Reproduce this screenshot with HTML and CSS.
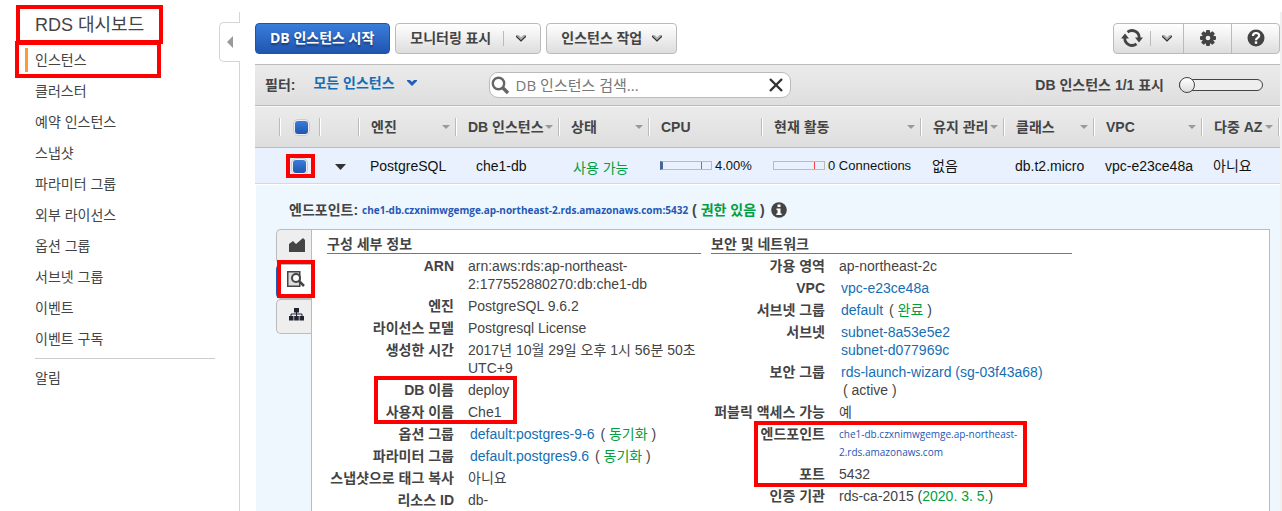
FILE: index.html
```html
<!DOCTYPE html>
<html lang="ko">
<head>
<meta charset="utf-8">
<title>RDS 대시보드</title>
<link rel="stylesheet" href="styles.css">
</head>
<body>
<div class="layout">
  <aside class="sidebar">
    <h1 class="side-title">RDS 대시보드<span class="mark mark-title"></span></h1>
    <nav>
      <ul class="side-list">
        <li class="active"><a href="#">인스턴스</a><span class="mark mark-nav"></span></li>
        <li><a href="#">클러스터</a></li>
        <li><a href="#">예약 인스턴스</a></li>
        <li><a href="#">스냅샷</a></li>
        <li><a href="#">파라미터 그룹</a></li>
        <li><a href="#">외부 라이선스</a></li>
        <li><a href="#">옵션 그룹</a></li>
        <li><a href="#">서브넷 그룹</a></li>
        <li><a href="#">이벤트</a></li>
        <li><a href="#">이벤트 구독</a></li>
      </ul>
      <ul class="side-list side-extra">
        <li><a href="#">알림</a></li>
      </ul>
    </nav>
    <button class="collapse" type="button" aria-label="접기"><svg width="6" height="12" viewBox="0 0 6 12"><path d="M6 0v12L0 6z" fill="#999"/></svg></button>
  </aside>

  <main class="main">
    <div class="toolbar">
      <button class="btn primary" type="button">DB 인스턴스 시작</button>
      <button class="btn split" type="button"><span>모니터링 표시</span><span class="bar"></span><svg class="chev" width="10" height="7" viewBox="0 0 10 7"><path d="M0 0h2.500L5 2.500 7.500 0H10v1.500L5 6.500 0 1.500z" fill="#aaa"/><path d="M0 1.200L5 6l5-4.800" fill="none" stroke="#333" stroke-width="1.200"/></svg></button>
      <button class="btn" type="button"><span>인스턴스 작업</span><svg class="chev" width="10" height="7" viewBox="0 0 10 7"><path d="M0 0h2.500L5 2.500 7.500 0H10v1.500L5 6.500 0 1.500z" fill="#aaa"/><path d="M0 1.200L5 6l5-4.800" fill="none" stroke="#333" stroke-width="1.200"/></svg></button>
      <div class="tools">
        <button class="tool tool-refresh" type="button" aria-label="새로 고침">
          <svg width="22" height="20" viewBox="0 0 22 20"><g fill="none" stroke="#444" stroke-width="2.800"><path d="M6.500 4.200A7.200 7.200 0 0 1 18.200 10"/><path d="M15.500 15.800A7.200 7.200 0 0 1 3.800 10"/></g><path d="M14 9.500h8l-4 5zM0 10.500h8L4 5.500z" fill="#444"/></svg>
          <span class="bar"></span>
          <svg class="chev" width="10" height="7" viewBox="0 0 10 7"><path d="M0 0h2.500L5 2.500 7.500 0H10v1.500L5 6.500 0 1.500z" fill="#aaa"/><path d="M0 1.200L5 6l5-4.800" fill="none" stroke="#333" stroke-width="1.200"/></svg>
        </button>
        <button class="tool" type="button" aria-label="설정">
          <svg width="16" height="16" viewBox="0 0 16 16"><g fill="#444"><circle cx="8" cy="8" r="6"/><rect x="6" y="0" width="4" height="16" rx="1"/><rect x="0" y="6" width="16" height="4" rx="1"/><rect x="6" y="0" width="4" height="16" rx="1" transform="rotate(45 8 8)"/><rect x="6" y="0" width="4" height="16" rx="1" transform="rotate(-45 8 8)"/></g><circle cx="8" cy="8" r="2.300" fill="#eee"/></svg>
        </button>
        <button class="tool" type="button" aria-label="도움말">
          <svg width="18" height="18" viewBox="0 0 18 18"><circle cx="9" cy="9" r="8.500" fill="#444"/><path d="M6 7c0-4 6.200-3.800 6.200-.4C12.200 9 9 8.800 9 11.300" fill="none" stroke="#fff" stroke-width="2.200"/><rect x="7.800" y="12.400" width="2.400" height="2.400" fill="#fff"/></svg>
        </button>
      </div>
    </div>

    <div class="filters">
      <span class="filter-label">필터:</span>
      <button class="filter-pick" type="button"><span>모든 인스턴스</span><svg class="chev" width="10" height="6" viewBox="0 0 10 6"><path d="M0 0h3l2 2 2-2h3v1L5 6 0 1z" fill="#1f5fb8"/></svg></button>
      <div class="search">
        <svg width="19" height="19" viewBox="0 0 19 19"><circle cx="7.500" cy="7.500" r="5.700" fill="none" stroke="#666" stroke-width="2.400"/><path d="M11.500 11.500l5.500 5.500" stroke="#666" stroke-width="3.400"/></svg>
        <input type="text" aria-label="DB 인스턴스 검색" placeholder="DB 인스턴스 검색...">
        <button class="clear" type="button" aria-label="지우기"><svg width="14" height="14" viewBox="0 0 14 14"><path d="M1 1l12 12M13 1L1 13" stroke="#333" stroke-width="2.400"/></svg></button>
      </div>
      <label class="count" for="page">DB 인스턴스 1/1 표시</label>
      <input class="slider" id="page" type="range" min="0" max="1" value="0">
    </div>

    <table class="grid">
      <colgroup><col class="w-pad"><col class="w-check"><col class="w-arrow"><col class="w-engine"><col class="w-name"><col class="w-state"><col class="w-cpu"><col class="w-act"><col class="w-maint"><col class="w-class"><col class="w-vpc"><col></colgroup>
      <thead>
        <tr>
          <th></th>
          <th class="pick"><input type="checkbox" checked aria-label="모두 선택"></th>
          <th></th>
          <th class="sort"><span>엔진</span></th>
          <th class="sort"><span>DB 인스턴스</span></th>
          <th class="sort"><span>상태</span></th>
          <th><span>CPU</span></th>
          <th class="sort"><span>현재 활동</span></th>
          <th class="sort"><span>유지 관리</span></th>
          <th class="sort"><span>클래스</span></th>
          <th class="sort"><span>VPC</span></th>
          <th class="sort"><span>다중 AZ</span></th>
        </tr>
      </thead>
      <tbody>
        <tr>
          <td></td>
          <td class="pick"><span class="pick-box"><input type="checkbox" checked aria-label="che1-db 선택"><span class="mark mark-check"></span></span></td>
          <td class="pick"><svg width="11" height="6" viewBox="0 0 11 6"><path d="M0 0h11L5.500 6z" fill="#333"/></svg></td>
          <td>PostgreSQL</td>
          <td class="name">che1-db</td>
          <td class="state">사용 가능</td>
          <td><div class="meter"><span class="gauge used"></span>4.00%</div></td>
          <td><div class="meter"><span class="gauge"></span>0 Connections</div></td>
          <td>없음</td>
          <td>db.t2.micro</td>
          <td>vpc-e23ce48a</td>
          <td>아니요</td>
        </tr>
      </tbody>
    </table>

    <section class="details">
      <div class="endpoint">
        <span>엔드포인트:</span>
        <span class="host">che1-db.czxnimwgemge.ap-northeast-2.rds.amazonaws.com:5432</span>
        <span>( <span class="ok">권한 있음</span> )</span>
        <svg width="16" height="16" viewBox="0 0 16 16"><circle cx="8" cy="8" r="7.800" fill="#444"/><path d="M6.500 2.500h3v2.500h-3zM5.500 6.500h4v5h1.200V13H5.300v-1.500h1.200V8h-1z" fill="#fff"/></svg>
      </div>
      <div class="detail-body">
        <div class="tabs">
          <button class="tab" type="button" aria-label="모니터링"><svg width="16" height="14" viewBox="0 0 16 14"><path d="M0 14V6l4-3 3 3 7-6 2 2v12z" fill="#444"/></svg></button>
          <button class="tab current" type="button" aria-label="세부 정보"><svg width="18" height="16" viewBox="0 0 18 16"><path d="M.75.750h12v14.500h-12z" fill="#ddd" stroke="#444" stroke-width="1.500"/><circle cx="9" cy="7" r="4" fill="#fff" stroke="#444" stroke-width="2"/><path d="M12 10l5 5" stroke="#444" stroke-width="2.500"/></svg><span class="mark mark-tab"></span></button>
          <button class="tab" type="button" aria-label="구성"><svg width="15" height="13" viewBox="0 0 15 13"><path d="M5 0h5v4.500H5zM0 8h4.500v4.500H0zM5.200 8h4.600v4.500H5.200zM10.500 8H15v4.500h-4.500z" fill="#223"/><path d="M7.500 4v4M2 8.500v-2.500h11v2.500" fill="none" stroke="#223"/></svg></button>
        </div>
        <div class="panel">
          <section class="config">
            <h2>구성 세부 정보</h2>
            <dl>
              <dt>ARN</dt><dd>arn:aws:rds:ap-northeast-<br>2:177552880270:db:che1-db</dd>
              <dt>엔진</dt><dd>PostgreSQL 9.6.2</dd>
              <dt>라이선스 모델</dt><dd>Postgresql License</dd>
              <dt>생성한 시간</dt><dd>2017년 10월 29일 오후 1시 56분 50초<br>UTC+9</dd>
              <dt class="anchor"><span class="mark mark-db"></span>DB 이름</dt><dd>deploy</dd>
              <dt>사용자 이름</dt><dd>Che1</dd>
              <dt>옵션 그룹</dt><dd><a href="#">default:postgres-9-6</a> ( <span class="ok">동기화</span> )</dd>
              <dt>파라미터 그룹</dt><dd><a href="#">default.postgres9.6</a> ( <span class="ok">동기화</span> )</dd>
              <dt>스냅샷으로 태그 복사</dt><dd>아니요</dd>
              <dt>리소스 ID</dt><dd>db-</dd>
            </dl>
          </section>
          <section class="network">
            <h2>보안 및 네트워크</h2>
            <dl>
              <dt>가용 영역</dt><dd>ap-northeast-2c</dd>
              <dt>VPC</dt><dd><a href="#">vpc-e23ce48a</a></dd>
              <dt>서브넷 그룹</dt><dd><a href="#">default</a> ( <span class="ok">완료</span> )</dd>
              <dt>서브넷</dt><dd><a href="#">subnet-8a53e5e2</a><br><a href="#">subnet-d077969c</a></dd>
              <dt>보안 그룹</dt><dd><a href="#">rds-launch-wizard (sg-03f43a68)</a><br><span class="note">( active )</span></dd>
              <dt>퍼블릭 액세스 가능</dt><dd>예</dd>
              <dt class="anchor"><span class="mark mark-endpoint"></span>엔드포인트</dt><dd class="host-small">che1-db.czxnimwgemge.ap-northeast-<br>2.rds.amazonaws.com</dd>
              <dt>포트</dt><dd>5432</dd>
              <dt>인증 기관</dt><dd>rds-ca-2015 (<span class="ok">2020. 3. 5.</span>)</dd>
            </dl>
          </section>
        </div>
      </div>
    </section>
  </main>
</div>
</body>
</html>
```
FILE: styles.css
```css
* { box-sizing: border-box; }
body {
  margin: 0;
  height: 100vh;
  overflow: hidden;
  background: #fff;
  color: #444;
  font: 14px/18px "Liberation Sans", "Noto Sans CJK KR", sans-serif;
}
button, input { font: inherit; color: inherit; }
button { cursor: pointer; }
h1, h2, ul, dl, dd { margin: 0; padding: 0; font-weight: normal; }
ul { list-style: none; }
a { color: #146eb4; text-decoration: none; }
.ok { color: #00a040; }
.layout { display: flex; min-height: 100vh; }

/* highlight frames drawn over the console */
.mark { position: absolute; border: 4px solid #f00; pointer-events: none; z-index: 2; }
.mark-title { inset: -8px 76px -7px -19px; }
.mark-nav { inset: -6px 59px 0 -20px; }
.mark-check { inset: -4px -7px -3px -5px; }
.mark-tab { inset: -5px -4px 0 -2px; }
.mark-db { top: -5px; right: -63px; width: 143px; height: 48px; }
.mark-endpoint { top: -4px; right: -202px; width: 273px; height: 66px; }

.sidebar {
  position: relative;
  flex: 0 0 240px;
  margin-top: 12px;
  padding: 0 20px 0 35px;
  border-right: 1px solid #d5d5d5;
}
.side-title { position: relative; margin: 1px -20px 10px 0; font-size: 18px; line-height: 24px; }
.side-list li { position: relative; height: 31px; margin-right: -1px; line-height: 26px; }
.side-list .active::before {
  content: "";
  position: absolute;
  left: -10px;
  top: 1px;
  width: 3px;
  height: 24px;
  background: #f93;
}
.side-list a { color: #444; }
.side-extra { margin: 1px 4px 0 0; padding-top: 6px; border-top: 1px solid #ccc; }
.collapse {
  position: absolute;
  top: 10px;
  right: -1px;
  width: 21px;
  height: 40px;
  display: flex;
  align-items: center;
  justify-content: center;
  padding: 0;
  border: 1px solid #d5d5d5;
  border-right: 0;
  border-radius: 5px 0 0 5px;
  background: #fff;
}

.main {
  flex: 1;
  min-width: 0;
  display: flex;
  flex-direction: column;
  margin: 12px 0 0 15px;
  border-right: 2px solid #f0f0f0;
}
.toolbar { display: flex; align-items: center; gap: 5px; height: 52px; }
.btn {
  height: 31px;
  display: flex;
  align-items: center;
  gap: 10px;
  padding: 0 14px;
  border: 1px solid #bbb;
  border-radius: 4px;
  background: linear-gradient(#fff, #ddd);
  font-family: "Open Sans", "Noto Sans CJK KR", sans-serif;
  font-weight: bold;
  white-space: nowrap;
}
.btn.primary {
  padding-right: 15px;
  border-color: #1f54a5;
  background: linear-gradient(#3a7ddb, #1f55b0);
  color: #fff;
  text-shadow: 0 2px 2px rgba(0, 0, 0, .4);
}
.btn.split { gap: 12px; }
.bar { width: 1px; height: 15px; background: #bbb; }
.tools {
  display: flex;
  height: 31px;
  margin-left: auto;
  border: 1px solid #bbb;
  border-radius: 4px;
  background: linear-gradient(#fff, #ddd);
}
.tool {
  width: 48px;
  display: flex;
  align-items: center;
  justify-content: center;
  padding: 0;
  border: 0;
  border-left: 1px solid #bbb;
  background: none;
}
.tool-refresh { width: 69px; gap: 7px; padding-right: 5px; border-left: 0; }
.tool-refresh .chev { margin-left: 4px; }

.filters {
  display: flex;
  align-items: center;
  height: 42px;
  padding: 0 17px 0 10px;
  border: solid #bbb;
  border-width: 1px 0;
  background: linear-gradient(#ebebeb, #dedede);
  font-weight: bold;
  white-space: nowrap;
}
.filter-pick {
  display: flex;
  align-items: center;
  gap: 12px;
  margin: 0 72px 4px 18px;
  padding: 0;
  border: 0;
  background: none;
  color: #146eb4;
  font-weight: bold;
}
.search {
  display: flex;
  align-items: center;
  flex: 0 1 302px;
  height: 26px;
  padding: 0 7px 0 1px;
  border: 1px solid #bbb;
  border-radius: 9px;
  background: #fff;
}
.search input {
  flex: 1;
  min-width: 0;
  padding: 0 6px;
  border: 0;
  outline: 0;
  background: none;
  font: 15px/20px "Open Sans", "Noto Sans CJK KR", sans-serif;
}
.search input::placeholder { color: #777; opacity: 1; }
.clear { display: flex; padding: 0; border: 0; background: none; }
.count { margin-left: auto; }
.slider {
  -webkit-appearance: none;
  appearance: none;
  width: 84px;
  height: 12px;
  margin: 0 0 0 15px;
  border: 1px solid #444;
  border-radius: 6px;
  background: #eee;
}
.slider::-webkit-slider-thumb {
  -webkit-appearance: none;
  width: 16px;
  height: 16px;
  margin-left: -1px;
  border: 1px solid #444;
  border-radius: 8px;
  background: linear-gradient(#fff, #ddd);
}

.grid { width: 100%; table-layout: fixed; border-collapse: separate; border-spacing: 0; white-space: nowrap; }
.w-pad { width: 26px; }
.w-check { width: 40px; }
.w-arrow { width: 39px; }
.w-engine { width: 97px; }
.w-name { width: 103px; }
.w-state { width: 90px; }
.w-cpu { width: 113px; }
.w-act { width: 159px; }
.w-maint { width: 83px; }
.w-class { width: 90px; }
.w-vpc { width: 108px; }
.grid th {
  position: relative;
  height: 42px;
  padding: 0 0 0 11px;
  border-top: 1px solid #f8f8f8;
  border-bottom: 1px solid #bbb;
  background:
    linear-gradient(90deg, #bbb 50%, #fff 50%) right center / 2px 18px no-repeat,
    linear-gradient(#ebebeb, #dedede);
  text-align: left;
}
.grid .sort::after {
  content: "";
  position: absolute;
  right: 7px;
  top: 18px;
  border: solid transparent;
  border-width: 4px 4px 0;
  border-top-color: #999;
}
.grid td {
  height: 36px;
  padding: 0 0 0 10px;
  border-bottom: 1px solid #d8d8d8;
  background: #e8f1fd;
  color: #111;
}
.grid .name { padding-left: 19px; }
.grid .state { padding: 5px 0 0 13px; color: #00a040; }
.grid .pick { padding: 0; text-align: center; }
.pick svg { vertical-align: middle; }
.pick-box { position: relative; display: inline-flex; margin-right: 3px; vertical-align: middle; }
.pick input {
  -webkit-appearance: none;
  appearance: none;
  display: inline-block;
  width: 17px;
  height: 17px;
  margin: 0;
  border: 2px solid #eee;
  border-radius: 5px;
  outline: 1px solid #ccc;
  outline-offset: -1px;
  background: linear-gradient(#3a7ddb, #1f55b0);
  vertical-align: middle;
}
.meter { display: flex; align-items: center; gap: 3px; font-size: 13px; }
.gauge {
  width: 52px;
  height: 9px;
  border: 1px solid #bbb;
  background: linear-gradient(#e44, #e44) 40px 0 / 1px 100% no-repeat;
}
.used { border-left: 3px solid #469; background-position: 38px 0; }

.details {
  flex: 1;
  display: flex;
  flex-direction: column;
  border: solid #fff;
  border-width: 1px 0 0 1px;
  background: #eff7fe;
}
.endpoint { display: flex; align-items: center; gap: 4px; height: 44px; padding: 6px 0 0 33px; font-weight: bold; white-space: nowrap; }
.endpoint svg { margin-left: 2px; }
.host, .panel .host-small { color: #2358b5; font-family: "Open Sans", sans-serif; font-size: 10px; }
.detail-body { flex: 1; display: flex; padding: 0 10px 0 20px; }
.tabs { flex: 0 0 35px; }
.tab {
  position: relative;
  width: 35px;
  height: 35px;
  display: flex;
  align-items: center;
  justify-content: center;
  padding: 0 0 4px 5px;
  border: 1px solid #bbb;
  border-right: 0;
  border-radius: 5px 0 0 5px;
  background: #eee;
}
.tab.current { padding: 0 0 6px 1px; border-left: 3px solid #2358b5; background: #fff; }
.panel { flex: 1; display: flex; gap: 10px; padding: 4px 15px; border: 1px solid #bbb; border-bottom: 0; background: #fff; }
.config { flex: 0 1 374px; }
.network { flex: 0 1 361px; }
.panel h2 { height: 20px; border-bottom: 1px solid #777; font-size: 14px; font-weight: bold; line-height: 20px; }
.panel dl { display: grid; grid-template-columns: 127px 1fr; gap: 4px 14px; padding-top: 3px; white-space: nowrap; }
.network dl { grid-template-columns: 114px 1fr; }
.panel dt { font-weight: bold; text-align: right; }
.anchor { position: relative; }
.panel dd a { padding: 0 2px; }
.note { padding-left: 4px; }
```
